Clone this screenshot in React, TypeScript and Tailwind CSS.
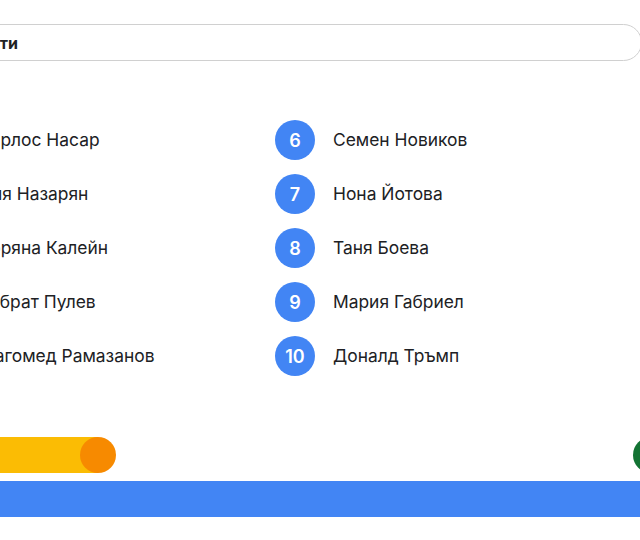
import React from 'react';

const left = ['Карлос Насар', 'Ния Назарян', 'Боряна Калейн', 'Кубрат Пулев', 'Магомед Рамазанов'];
const right = ['Семен Новиков', 'Нона Йотова', 'Таня Боева', 'Мария Габриел', 'Доналд Тръмп'];

const Row: React.FC<{ n: number; name: string }> = ({ n, name }) => (
  <div className="flex items-center gap-[18px] h-[40px]">
    <div className="w-[40px] h-[40px] shrink-0 rounded-full bg-[#4285f4] text-white flex items-center justify-center text-[18px] font-semibold">
      {n}
    </div>
    <span className="text-[17.4px] text-[#202124] whitespace-nowrap">{name}</span>
  </div>
);

const App: React.FC = () => {
  return (
    <div
      className="w-[640px] h-[540px] overflow-hidden bg-white"
      style={{ fontFamily: 'Inter, "Noto Sans", sans-serif' }}
    >
      <div className="pt-[24px] ml-[-120px] w-[762px]">
        <div className="h-[37px] rounded-full border-[1.5px] border-[#d0d0d0] flex items-center pl-[58px]">
          <span className="text-[16px] font-bold text-[#202124]">Личности</span>
        </div>
      </div>

      <div className="mt-[59px] ml-[-79px] grid grid-cols-[354px_1fr]">
        <div className="flex flex-col gap-[14px]">
          {left.map((name, i) => (
            <Row key={name} n={i + 1} name={name} />
          ))}
        </div>
        <div className="flex flex-col gap-[14px]">
          {right.map((name, i) => (
            <Row key={name} n={i + 6} name={name} />
          ))}
        </div>
      </div>

      <div className="mt-[61px] flex items-center justify-between h-[36px]">
        <div className="flex items-center">
          <div className="w-[98px] h-[36px] bg-[#fbbc04] -mr-[18px]" />
          <div className="w-[36px] h-[36px] rounded-full bg-[#f78a00]" />
        </div>
        <div className="w-[36px] h-[36px] rounded-full bg-[#137333] -mr-[29px]" />
      </div>

      <div className="mt-[8px] h-[36px] bg-[#4285f4]" />
    </div>
  );
};

export default App;
